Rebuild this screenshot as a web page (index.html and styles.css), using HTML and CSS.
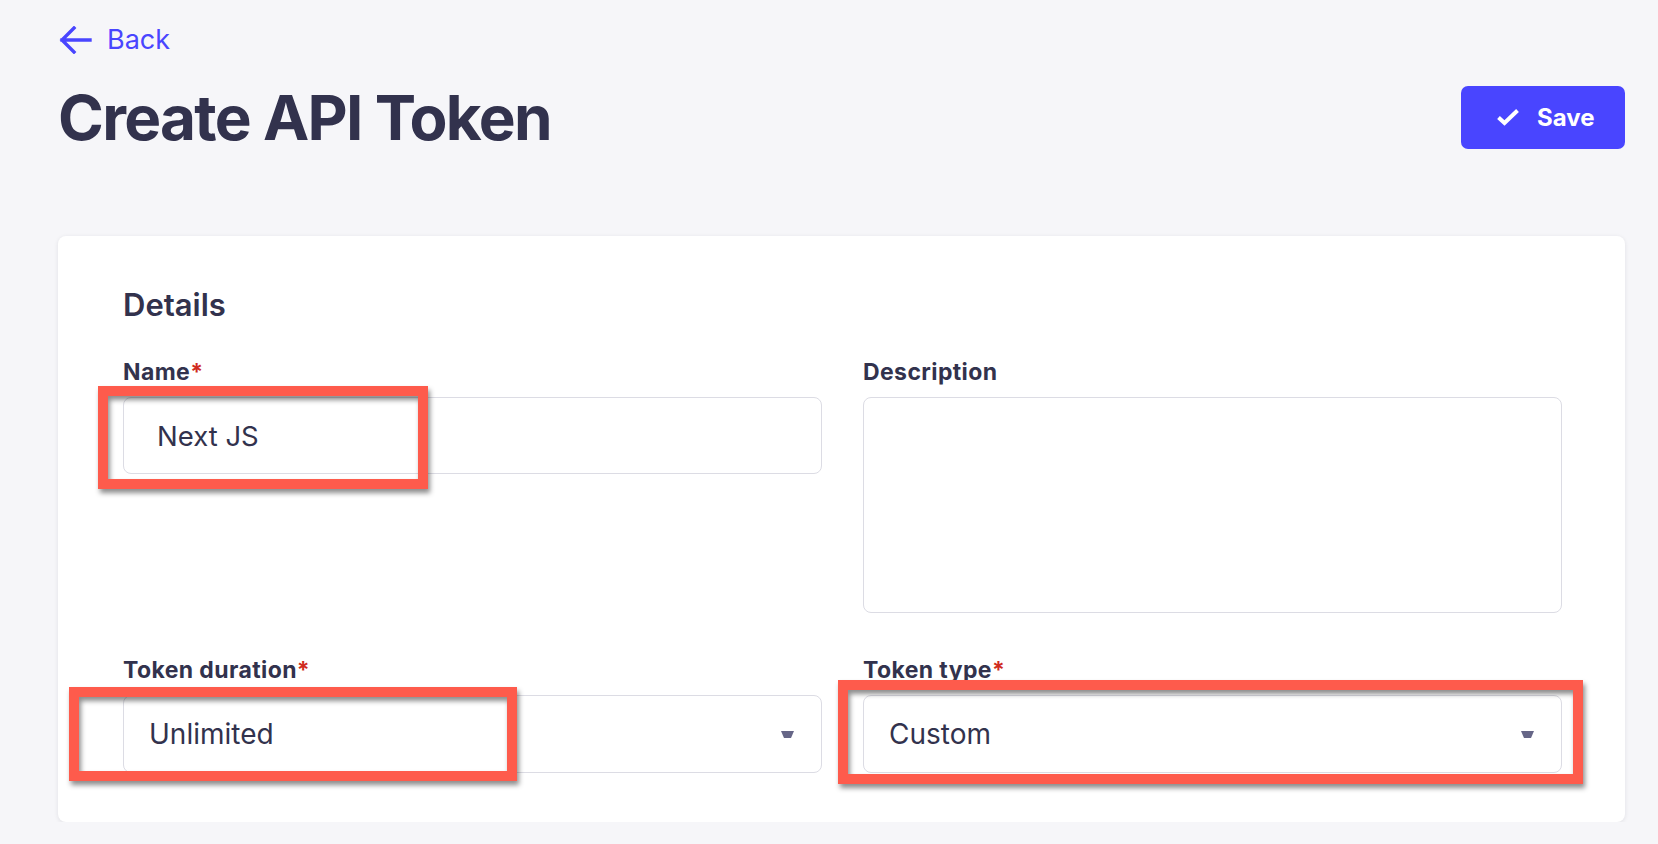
FILE: index.html
```html
<!DOCTYPE html>
<html lang="en">
<head>
<meta charset="utf-8">
<title>Create API Token</title>
<link rel="stylesheet" href="styles.css">
</head>
<body>
<div class="page">
  <a class="back" href="#">
    <svg class="back-icon" viewBox="0 0 34 28" width="34" height="28"><path d="M32 14 H4 M16 2 L4 14 L16 26" fill="none" stroke="#4945ff" stroke-width="3.4" stroke-linecap="square"/></svg>
    <span>Back</span>
  </a>
  <div class="header">
    <h1 class="title">Create API Token</h1>
    <button class="save">
      <svg viewBox="0 0 24 18" width="24" height="18"><path d="M2.5 9.5 L8.5 15 L21.5 2.5" fill="none" stroke="#fff" stroke-width="4"/></svg>
      <span>Save</span>
    </button>
  </div>
  <div class="card">
    <h2 class="section-title">Details</h2>
    <div class="grid">
      <div class="field">
        <label class="label">Name<span class="req">*</span></label>
        <div class="control-wrap">
          <div class="input">Next JS</div>
          <div class="mark mark-name"></div>
        </div>
      </div>
      <div class="field">
        <label class="label">Description</label>
        <div class="textarea"></div>
      </div>
      <div class="field">
        <label class="label">Token duration<span class="req">*</span></label>
        <div class="control-wrap">
          <div class="select"><span>Unlimited</span><span class="caret"></span></div>
          <div class="mark mark-duration"></div>
        </div>
      </div>
      <div class="field">
        <label class="label">Token type<span class="req">*</span></label>
        <div class="control-wrap">
          <div class="select"><span>Custom</span><span class="caret"></span></div>
          <div class="mark mark-type"></div>
        </div>
      </div>
    </div>
  </div>
</div>
</body>
</html>
```

FILE: styles.css
```css
html, body {
  margin: 0;
  padding: 0;
  background: #f6f6f9;
  font-family: Inter, "Noto Sans", "Liberation Sans", sans-serif;
  color: #32324d;
}

.page {
  padding: 26px 33px 0 58px;
}

.back {
  display: inline-flex;
  align-items: center;
  gap: 15px;
  color: #4945ff;
  text-decoration: none;
  font-size: 27px;
  line-height: 28px;
}

.back-icon {
  display: block;
}

.header {
  display: flex;
  justify-content: space-between;
  align-items: center;
  margin-top: 21px;
}

.title {
  margin: 0;
  font-size: 62px;
  line-height: 76px;
  font-weight: 700;
  letter-spacing: -1.7px;
  color: #32324d;
  position: relative;
  top: 1px;
}

.save {
  display: flex;
  align-items: center;
  gap: 17px;
  width: 164px;
  height: 63px;
  padding: 0 0 0 35px;
  border: none;
  border-radius: 7px;
  background: #4945ff;
  color: #fff;
  font-family: inherit;
  font-size: 24px;
  font-weight: 700;
}

.card {
  margin-top: 81px;
  background: #fff;
  border-radius: 8px;
  box-shadow: 0 1px 4px rgba(33, 33, 52, 0.1);
  padding: 50px 63px 49px 65px;
}

.section-title {
  margin: 0;
  font-size: 31px;
  line-height: 37px;
  font-weight: 600;
}

.grid {
  display: grid;
  grid-template-columns: 1fr 1fr;
  column-gap: 41px;
  row-gap: 44px;
  margin-top: 36px;
  align-items: start;
}

.field {
  display: flex;
  flex-direction: column;
  gap: 12px;
}

.label {
  font-size: 23px;
  line-height: 26px;
  font-weight: 700;
  letter-spacing: 0.4px;
}

.req {
  color: #d02b20;
}

.control-wrap {
  position: relative;
}

.input, .select, .textarea {
  box-sizing: border-box;
  border: 1.5px solid #dcdce4;
  border-radius: 8px;
  background: #fff;
}

.input {
  height: 77px;
  display: flex;
  align-items: center;
  padding-left: 33px;
  font-size: 27.5px;
}

.textarea {
  height: 216px;
}

.select {
  height: 78px;
  display: flex;
  align-items: center;
  justify-content: space-between;
  padding: 0 27px 0 25px;
  font-size: 28px;
}

.caret {
  width: 7px;
  height: 0;
  border-left: 3px solid transparent;
  border-right: 3px solid transparent;
  border-top: 7px solid #666687;
}

.mark {
  position: absolute;
  border: 10px solid #fe5b4c;
  box-shadow: 2px 4px 5px rgba(0, 0, 0, 0.45), inset 2px 4px 5px rgba(0, 0, 0, 0.45);
  pointer-events: none;
}

.mark-name {
  left: -25px;
  top: -11px;
  width: 310px;
  height: 83px;
}

.mark-duration {
  left: -54px;
  top: -8px;
  width: 428px;
  height: 74px;
}

.mark-type {
  left: -25px;
  top: -15px;
  width: 725px;
  height: 84px;
}
```
